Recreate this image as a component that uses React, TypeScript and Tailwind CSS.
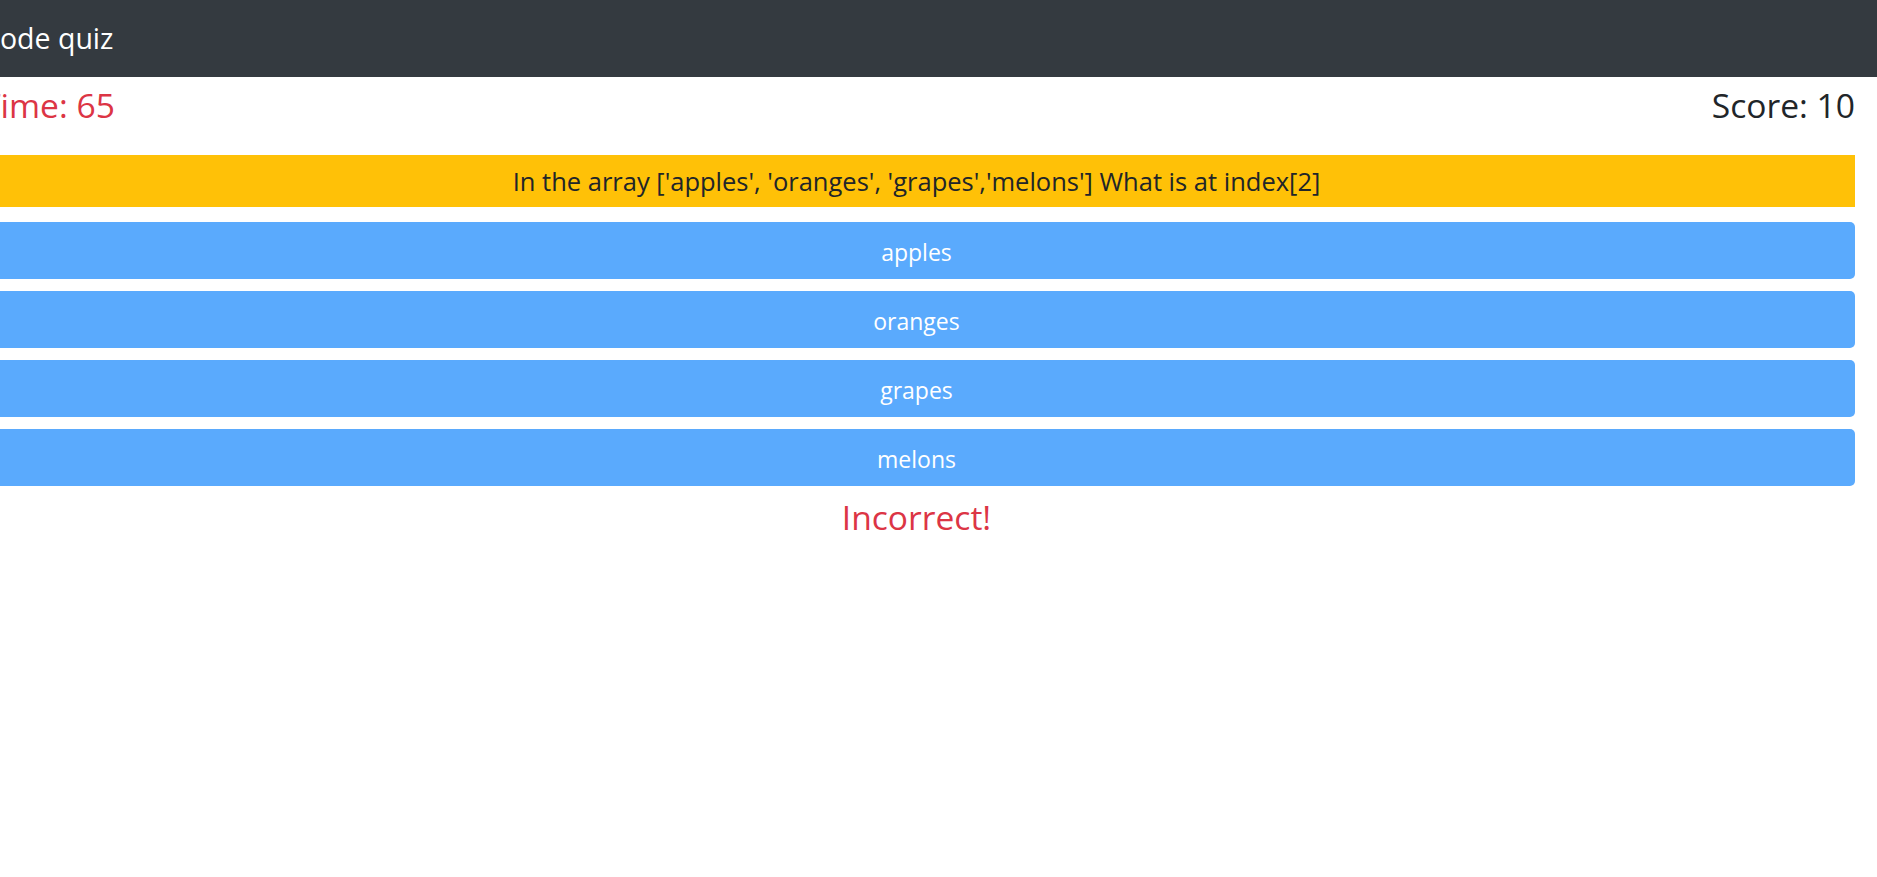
import React from 'react';

const answers = ['apples', 'oranges', 'grapes', 'melons'];

const font = { fontFamily: '"Segoe UI", "Open Sans", "Noto Sans", sans-serif' };

export default function App() {
  return (
    <div className="min-h-screen overflow-hidden bg-white" style={font}>
      <nav className="flex h-[77px] items-center bg-[#343a40]">
        <span className="-ml-[18px] text-[28.5px] text-white">Code quiz</span>
      </nav>
      <div className="-ml-[22px] mr-[22px]">
        <div className="flex h-[58px] items-center justify-between">
          <h3 className="pl-[4px] text-[33.6px] leading-none text-[#dc3545]">Time: 65</h3>
          <h3 className="text-[33.6px] leading-none text-[#212529]">Score: 10</h3>
        </div>
        <div className="mt-[20px] flex h-[52px] items-center justify-center bg-[#ffc107] text-[25.5px] text-[#212529]">
          In the array ['apples', 'oranges', 'grapes','melons'] What is at index[2]
        </div>
        <div className="mt-[15px] flex flex-col gap-[12px]">
          {answers.map((a) => (
            <button
              key={a}
              className="flex h-[57px] w-full items-center justify-center rounded-[5px] bg-[#5aaafd] pt-[4px] text-[23px] text-white"
            >
              {a}
            </button>
          ))}
        </div>
        <div className="flex h-[62px] items-center justify-center text-[33.6px] text-[#dc3545]">
          Incorrect!
        </div>
      </div>
    </div>
  );
}
